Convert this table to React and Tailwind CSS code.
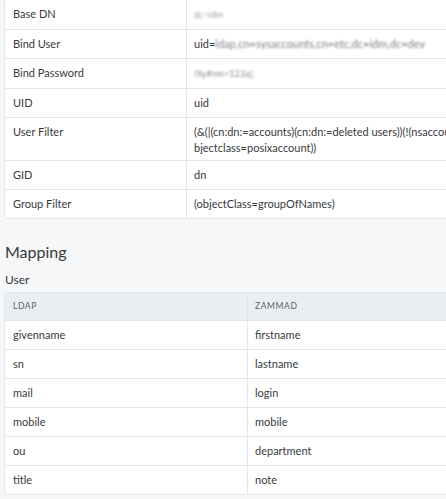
import React from "react";

const rows1 = [
  { k: "Base DN", v: <span className="blur-[1.2px] text-[#9aa0a6] text-[9px]">dc=idm</span> },
  {
    k: "Bind User",
    v: (
      <span>
        uid=<span className="blur-[0.8px] text-[#7a7f86]">ldap,cn=sysaccounts,cn=etc,dc=idm,dc=dev</span>
      </span>
    ),
  },
  { k: "Bind Password", v: <span className="blur-[1px] text-[#8a9096] text-[9px]">{"!Xy#mn=123a];"}</span> },
  { k: "UID", v: "uid" },
  {
    k: "User Filter",
    two: true,
    v: (
      <span className="whitespace-nowrap">
        (&amp;(|(cn:dn:=accounts)(cn:dn:=deleted users))(!(nsaccountlock=true))(o
        <br />
        bjectclass=posixaccount))
      </span>
    ),
  },
  { k: "GID", v: "dn" },
  { k: "Group Filter", v: "(objectClass=groupOfNames)" },
];

const rows2 = [
  ["givenname", "firstname"],
  ["sn", "lastname"],
  ["mail", "login"],
  ["mobile", "mobile"],
  ["ou", "department"],
  ["title", "note"],
];

export default function App() {
  return (
    <div
      className="w-[446px] h-[499px] overflow-hidden bg-[#f6f7f8] text-[#38393c] text-[11px] leading-[16px]"
      style={{ fontFamily: 'Lato, "Noto Sans", sans-serif' }}
    >
      <div className="pl-[4px] -mt-[1px]">
        <div className="w-[600px] bg-white border border-[#e3e6e9] rounded-[3px]">
          {rows1.map((r, i) => (
            <div
              key={i}
              className={`flex ${i > 0 ? "border-t border-[#e3e6e9]" : ""}`}
            >
              <div className={`w-[182px] shrink-0 px-[8px] border-r border-[#e3e6e9] ${r.two ? "py-[5px] pt-[6px]" : "py-[6px]"}`}>{r.k}</div>
              <div className={`flex-1 px-[7px] ${r.two ? "pt-[6px] pb-[4px]" : "py-[6px]"}`}>{r.v}</div>
            </div>
          ))}
        </div>
      </div>

      <div className="pl-[5px] mt-[22px] text-[16px] leading-[22px] text-[#38393c]">Mapping</div>
      <div className="pl-[5px] mt-[9px] text-[12px] leading-[16px]">User</div>

      <div className="pl-[4px] mt-[4px]">
        <div className="w-[490px] bg-white border border-[#e3e6e9] rounded-[3px] overflow-hidden">
          <div className="flex bg-[#ebeef0] text-[8.5px] tracking-[0.6px] text-[#5d6166] uppercase">
            <div className="w-[243px] shrink-0 px-[8px] py-[6px] leading-[15px] border-r border-[#e3e6e9]">LDAP</div>
            <div className="flex-1 px-[7px] py-[6px] leading-[15px]">ZAMMAD</div>
          </div>
          {rows2.map((r, i) => (
            <div key={i} className="flex border-t border-[#e3e6e9]">
              <div className="w-[243px] shrink-0 px-[8px] py-[6px] border-r border-[#e3e6e9]">{r[0]}</div>
              <div className="flex-1 px-[7px] py-[6px]">{r[1]}</div>
            </div>
          ))}
        </div>
      </div>
    </div>
  );
}
